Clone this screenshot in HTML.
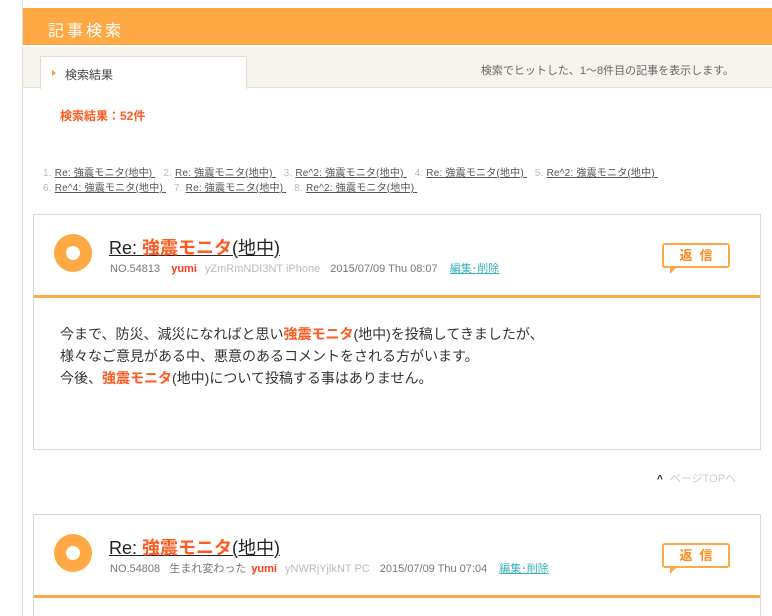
<!DOCTYPE html>
<html style="overflow:hidden;width:772px;height:616px"><head><meta charset="utf-8">
<style>
*{margin:0;padding:0;box-sizing:border-box}
body{width:772px;height:616px;overflow:hidden;background:#fff;font-family:"Liberation Sans","Noto Sans CJK JP",sans-serif;position:relative;color:#333}
.lline{position:absolute;left:22px;top:0;width:1px;height:616px;background:#ddd}
.hdr{position:absolute;left:23px;top:8px;width:749px;height:37px;background:#ffa944;color:#fff;font-size:16px;letter-spacing:3px;padding:9px 0 0 25px}
.tabbar{position:absolute;left:23px;top:47px;width:749px;height:41px;background:#f6f3ed;border-bottom:1px solid #e4e0da}
.tab{position:absolute;left:17px;top:9px;width:207px;height:33px;background:#fff;border:1px solid #ddd;border-bottom:none;font-size:12px;color:#444;padding:9px 0 0 24px}
.tab:before{content:"";position:absolute;left:11px;top:13px;border-left:4px solid #ff9a2e;border-top:3.5px solid transparent;border-bottom:3.5px solid transparent}
.note{position:absolute;right:38px;top:15px;font-size:11px;color:#666}
.cnt{position:absolute;left:60px;top:107px;font-size:12px;font-weight:bold;color:#ff5a1f}
.links{position:absolute;left:43px;top:166px;font-size:10px;line-height:15px;color:#bbb;width:720px;white-space:nowrap}
.links span{margin-right:8px;letter-spacing:0.2px}
.links a{color:#555;text-decoration:underline}
.card{position:absolute;left:33px;width:728px;border:1px solid #d8d8d8;background:#fff;overflow:hidden}
.ch{height:83px;border-bottom:3px solid #ffa944;position:relative}
.ring{position:absolute;left:20px;top:19px;width:38px;height:38px;border-radius:50%;background:#ffa944}
.ring:after{content:"";position:absolute;left:12px;top:12px;width:14px;height:14px;border-radius:50%;background:#fff}
.ttl{position:absolute;left:75px;top:19px;font-size:18px;color:#222;text-decoration:underline;white-space:nowrap}
.ttl b{color:#ff5a1f}
.meta{position:absolute;left:76px;top:45px;font-size:11px;color:#777;white-space:nowrap}
.meta .u{color:#ff3c1a;font-weight:bold;margin:0 8px}
.meta .g{color:#bbb;margin-right:10px}
.meta .e{color:#3bb3b8;text-decoration:underline;margin-left:9px}
.rep{position:absolute;left:628px;top:28px;width:68px;height:25px;border:2px solid #ffa944;border-radius:3px;color:#ff8a1e;font-size:13px;font-weight:bold;text-align:center;line-height:21px;letter-spacing:7px;padding-left:7px;background:#fff}
.rep:after{content:"";position:absolute;left:6px;top:23px;border-top:6px solid #ffa944;border-right:6px solid transparent}
.body{padding:25px 0 0 26px;font-size:14px;line-height:22px;color:#333}
.body b{color:#ff5a1f}
.top{position:absolute;left:657px;top:470px;font-size:11px;color:#ccc}
.top span{color:#222;margin-right:7px;font-size:10px;font-weight:bold}
</style></head><body>
<div class="lline"></div>
<div class="hdr">記事検索</div>
<div class="tabbar"><div class="tab">検索結果</div><div class="note">検索でヒットした、1～8件目の記事を表示します。</div></div>
<div class="cnt">検索結果：52件</div>
<div class="links">
<span>1. <a>Re: 強震モニタ(地中)&nbsp;</a></span><span>2. <a>Re: 強震モニタ(地中)&nbsp;</a></span><span>3. <a>Re^2: 強震モニタ(地中)&nbsp;</a></span><span>4. <a>Re: 強震モニタ(地中)&nbsp;</a></span><span>5. <a>Re^2: 強震モニタ(地中)&nbsp;</a></span><br>
<span>6. <a>Re^4: 強震モニタ(地中)&nbsp;</a></span><span>7. <a>Re: 強震モニタ(地中)&nbsp;</a></span><span>8. <a>Re^2: 強震モニタ(地中)&nbsp;</a></span>
</div>
<div class="card" style="top:214px;height:236px">
<div class="ch"><div class="ring"></div>
<div class="ttl">Re: <b>強震モニタ</b>(地中)</div>
<div class="meta">NO.54813 <span class="u">yumi</span><span class="g">yZmRmNDI3NT iPhone</span>2015/07/09 Thu 08:07 <span class="e">編集･削除</span></div>
<div class="rep">返信</div></div>
<div class="body">今まで、防災、減災になればと思い<b>強震モニタ</b>(地中)を投稿してきましたが、<br>様々なご意見がある中、悪意のあるコメントをされる方がいます。<br>今後、<b>強震モニタ</b>(地中)について投稿する事はありません。</div>
</div>
<div class="top"><span>^</span>ページTOPへ</div>
<div class="card" style="top:514px;height:102px;border-bottom:none">
<div class="ch"><div class="ring"></div>
<div class="ttl">Re: <b>強震モニタ</b>(地中)</div>
<div class="meta">NO.54808 &nbsp; 生まれ変わった<span class="u" style="margin-left:5px">yumi</span><span class="g">yNWRjYjlkNT PC</span>2015/07/09 Thu 07:04 <span class="e">編集･削除</span></div>
<div class="rep">返信</div></div>
</div>
</body></html>
